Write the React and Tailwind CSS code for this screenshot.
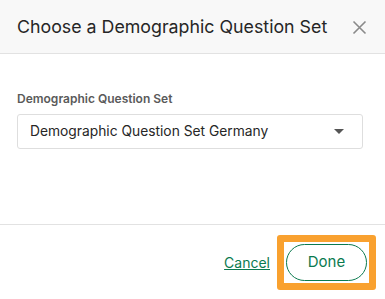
export default function App() {
  return (
    <div className="w-[385px] h-[299px] bg-white overflow-hidden" style={{ fontFamily: 'Inter, "Liberation Sans", sans-serif' }}>
      <div className="h-[54px] bg-[#f8f8f8] border-b border-[#e2e2e2] flex items-center justify-between pl-[17px] pr-[18px] pt-[2px]">
        <h1 className="text-[17.8px] text-[#262626]">Choose a Demographic Question Set</h1>
        <button className="text-[#8a8a8a]">
          <svg width="15" height="15" viewBox="0 0 15 15" fill="none" stroke="currentColor" strokeWidth="1.6">
            <path d="M1.5 1.5l12 12M13.5 1.5l-12 12" />
          </svg>
        </button>
      </div>

      <div className="h-[171px] border-b border-[#e2e2e2] px-[17px] pt-[37px]">
        <label className="block text-[12px] font-semibold text-[#5a5a5a] leading-4 mb-[7px]">Demographic Question Set</label>
        <div className="w-[346px] h-[35px] border border-[#dedede] rounded-[3px] flex items-center justify-between pl-[12px] pr-[18px]">
          <span className="text-[13.8px] text-[#262626]">Demographic Question Set Germany</span>
          <svg width="10" height="6" viewBox="0 0 10 6" className="text-[#555]">
            <path d="M0 0h10L5 5z" fill="currentColor" />
          </svg>
        </div>
      </div>

      <div className="flex items-center justify-end pr-[9px] pt-[10px]">
        <a href="#" className="text-[14px] text-[#0b7a4f] underline mr-[7px]">Cancel</a>
        <div className="border-[7px] border-[#f9a12f] rounded-[3px] p-[2px]">
          <button className="w-[81px] h-[37px] rounded-full border border-[#0b7a4f] text-[#0b7a4f] text-[15px]">Done</button>
        </div>
      </div>
    </div>
  );
}
